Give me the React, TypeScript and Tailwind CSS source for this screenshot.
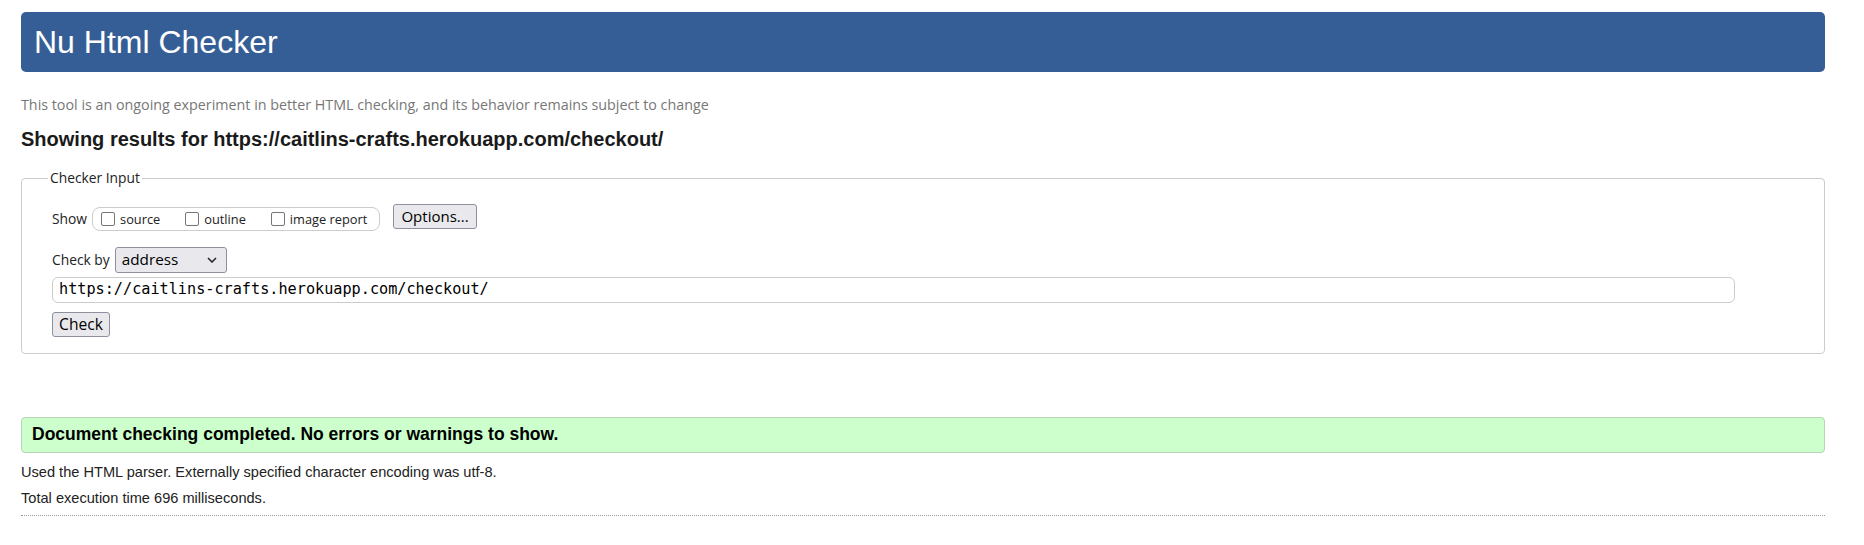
import React from 'react';

const sans = "font-['Liberation_Sans',Arial,sans-serif]";
const ui = "font-['Open_Sans',sans-serif]";

function Checkbox({ label }: { label: string }) {
  return (
    <label className="flex items-center gap-[5px]">
      <span className="w-[14px] h-[14px] border border-[#767676] rounded-[2px] bg-white" />
      <span className="text-[12.8px] leading-[18px] text-[#222]">{label}</span>
    </label>
  );
}

function Button({ children, className }: { children: React.ReactNode; className?: string }) {
  return (
    <button
      className={`h-[25px] px-[6px] flex items-center justify-center bg-[#e9e9ed] border border-[#8f8f9d] rounded-[3px] text-black ${ui} ${className ?? ''}`}
    >
      {children}
    </button>
  );
}

export default function App() {
  return (
    <div className={`min-h-screen bg-white pl-[21px] ${sans}`}>
      <div className="w-[1804px]">
        <header className="mt-[12px] h-[60px] rounded-[5px] bg-[#365e96] flex items-center pl-[13px]">
          <h1 className="text-[32px] leading-none text-white">Nu Html Checker</h1>
        </header>

        <p className={`mt-[24px] text-[14.3px] leading-[18px] text-[#777] ${ui}`}>
          This tool is an ongoing experiment in better HTML checking, and its behavior remains subject to change
        </p>

        <h2 className="mt-[13px] text-[20px] leading-[24px] font-bold text-[#1a1a1a]">
          Showing results for https://caitlins-crafts.herokuapp.com/checkout/
        </h2>

        <fieldset className={`mt-[17px] border border-[#ccc] rounded-[4px] pl-[30px] pt-[16px] pb-[16px] ${ui}`}>
          <legend className="ml-[-4px] px-[2px] text-[13.8px] leading-[20px] text-[#222]">Checker Input</legend>

          <div className="flex items-start">
            <span className="mt-[5px] text-[13.8px] leading-[20px] text-[#222]">Show</span>
            <div className="ml-[5px] mt-[3px] h-[24px] w-[288px] border border-[#ccc] rounded-[8px] flex items-center pl-[8px] gap-[25px]">
              <Checkbox label="source" />
              <Checkbox label="outline" />
              <Checkbox label="image report" />
            </div>
            <Button className="ml-[13px] w-[84px] text-[15px]">Options...</Button>
          </div>

          <div className="mt-[16px] h-[26px] flex items-center">
            <span className="text-[13.8px] leading-[20px] text-[#222]">Check by</span>
            <div className="ml-[5px] w-[112px] h-[26px] bg-[#e9e9ed] border border-[#8f8f9d] rounded-[3px] flex items-center justify-between pl-[6px] pr-[9px]">
              <span className="text-[15.3px] leading-none text-black">address</span>
              <svg width="10" height="6" viewBox="0 0 10 6" fill="none">
                <path d="M1 1l4 4 4-4" stroke="#222" strokeWidth="1.5" />
              </svg>
            </div>
          </div>

          <div className="mt-[4px] w-[1683px] h-[26px] border border-[#ccc] rounded-[6px] flex items-center pl-[6px]">
            <span className="font-['DejaVu_Sans_Mono',monospace] text-[15.2px] leading-none text-black">
              https://caitlins-crafts.herokuapp.com/checkout/
            </span>
          </div>

          <Button className="mt-[9px] w-[58px] text-[15.6px]">Check</Button>
        </fieldset>

        <div className="mt-[63px] h-[36px] bg-[#ccffcc] border border-[#b9d3b9] rounded-[4px] flex items-center pl-[10px]">
          <p className="text-[17.5px] font-bold text-black leading-none">
            Document checking completed. No errors or warnings to show.
          </p>
        </div>

        <p className="mt-[6px] text-[14.6px] leading-[26px] text-[#222]">
          Used the HTML parser. Externally specified character encoding was utf-8.
        </p>
        <p className="text-[14.6px] leading-[26px] text-[#222]">Total execution time 696 milliseconds.</p>

        <div className="mt-[4px] border-t border-dotted border-[#999]" />
      </div>
    </div>
  );
}
